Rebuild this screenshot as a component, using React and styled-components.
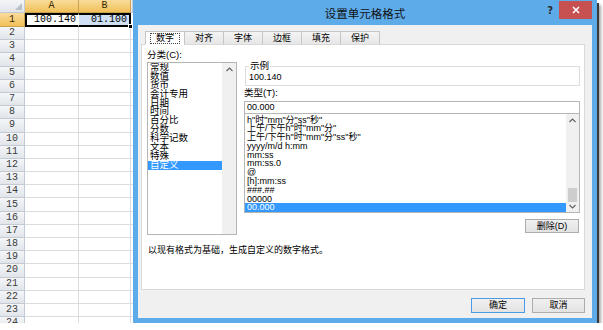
import React from "react";
import styled, { createGlobalStyle } from "styled-components";

const SANS = `"Liberation Sans", "Noto Sans CJK SC", sans-serif`;
const MONO = `"Liberation Mono", "Noto Sans CJK SC", monospace`;

const GlobalStyle = createGlobalStyle`
  html, body { margin: 0; padding: 0; background: #fff; overflow: hidden; }
  body { font-family: ${SANS}; color: #000; }
  * { box-sizing: border-box; }
`;

const rows = Array.from({ length: 24 }, (_, i) => i + 1);

const categories = ["常规", "数值", "货币", "会计专用", "日期", "时间", "百分比", "分数", "科学记数", "文本", "特殊", "自定义"];

const formats = [
  'h"时"mm"分"ss"秒"',
  '上午/下午h"时"mm"分"',
  '上午/下午h"时"mm"分"ss"秒"',
  "yyyy/m/d h:mm",
  "mm:ss",
  "mm:ss.0",
  "@",
  "[h]:mm:ss",
  "###.##",
  "00000",
  "00.000",
];

const tabs = ["数字", "对齐", "字体", "边框", "填充", "保护"];

const Frame = styled.div`
  display: flex;
  width: 597px;
  height: 323px;
  box-shadow: 2px 3px 0 #3a3a3a, 4px 5px 3px rgba(0, 0, 0, 0.35);
`;

/* ---------- spreadsheet ---------- */

const Sheet = styled.div`
  flex: none;
  width: 133px;
  height: 323px;
  overflow: hidden;
  display: grid;
  grid-template-columns: 25px 54px 52px 2px;
  grid-template-rows: 13px 14px;
  grid-auto-rows: 13.2px;
  align-content: start;
  font-family: ${MONO};
  font-size: 10px;
  color: #333;
`;

const Corner = styled.div`
  position: relative;
  background: linear-gradient(#f4f6f8, #e1e5ea);
  border-right: 1px solid #c3cad3;
  border-bottom: 1px solid #c3cad3;

  &::after {
    content: "";
    position: absolute;
    right: 2px;
    bottom: 2px;
    border-left: 7px solid transparent;
    border-bottom: 7px solid #b9c0c9;
  }
`;

const Head = styled.div`
  display: flex;
  align-items: center;
  justify-content: center;
  background: ${(p) => (p.$active ? "linear-gradient(#f9dc9c, #f1c058)" : "linear-gradient(#f4f6f8, #e1e5ea)")};
  border-right: 1px solid ${(p) => (p.$active ? "#c9a24f" : "#c3cad3")};
  border-bottom: 1px solid ${(p) => (p.$active ? "#c9a24f" : "#c3cad3")};
  color: ${(p) => (p.$active ? "#3a2a00" : "#3c3c3c")};
  line-height: 1;
`;

const Cell = styled.div`
  position: relative;
  display: flex;
  align-items: center;
  justify-content: flex-end;
  padding-right: 2px;
  background: ${(p) => (p.$tint ? "#cfe0f5" : "#fff")};
  border-right: 1px solid #dadcdf;
  border-bottom: 1px solid #dadcdf;
  color: #000;
  line-height: 1;
  ${(p) => p.$selLeft && "border-left: 2px solid #000; border-top: 2px solid #000; border-bottom: 2px solid #000; border-right-color: transparent;"}
  ${(p) => p.$selRight && "border-right: 2px solid #000; border-top: 2px solid #000; border-bottom: 2px solid #000;"}
`;

const FillHandle = styled.span`
  position: absolute;
  right: -4px;
  bottom: -4px;
  width: 5px;
  height: 5px;
  background: #000;
  border: 1px solid #fff;
  z-index: 2;
`;

/* ---------- dialog ---------- */

const Dialog = styled.div`
  flex: 1;
  display: flex;
  flex-direction: column;
  background: #5eabea;
  padding: 0 5px 5px;
`;

const TitleBar = styled.div`
  height: 25px;
  flex: none;
  display: grid;
  grid-template-columns: 1fr auto 1fr;
  align-items: start;
`;

const Title = styled.div`
  grid-column: 2;
  padding-top: 7px;
  font-size: 11.5px;
  line-height: 14px;
  color: #111;
`;

const Controls = styled.div`
  grid-column: 3;
  justify-self: end;
  display: flex;
  align-items: flex-start;
`;

const Help = styled.span`
  margin-top: 5px;
  margin-right: 6px;
  font-family: "DejaVu Sans", sans-serif;
  font-weight: bold;
  font-size: 10px;
  color: #2b2b2b;
`;

const Close = styled.div`
  width: 33px;
  height: 18px;
  margin-top: 1px;
  background: #c75050;
  display: flex;
  align-items: center;
  justify-content: center;
`;

const Client = styled.div`
  flex: 1;
  display: flex;
  flex-direction: column;
  background: #f0f0f0;
  padding: 6px 7px 0 3px;
`;

const TabRow = styled.div`
  position: relative;
  z-index: 1;
  display: flex;
  margin-left: 4px;
  margin-bottom: -1px;
`;

const Tab = styled.div`
  width: 40px;
  height: 14px;
  margin-right: -1px;
  display: flex;
  align-items: center;
  justify-content: center;
  border: 1px solid #c6c6c6;
  border-bottom-color: ${(p) => (p.$active ? "#fff" : "#d9d9d9")};
  background: ${(p) => (p.$active ? "#fff" : "linear-gradient(#f4f4f4, #e6e6e6)")};
  font-size: 9px;
  line-height: 1;
`;

const FocusText = styled.span`
  padding: 0 5px;
  outline: ${(p) => (p.$focus ? "1px dotted #444" : "none")};
  outline-offset: 0;
`;

const Panel = styled.div`
  height: 246px;
  background: #fff;
  border: 1px solid #d9d9d9;
  display: grid;
  grid-template-columns: 90px 336px;
  grid-template-rows: auto auto;
  column-gap: 7px;
  align-content: start;
  padding: 5px 4px 0 5px;
`;

const Column = styled.div`
  display: flex;
  flex-direction: column;
  padding-top: ${(p) => p.$pad || 0}px;
`;

const Label = styled.div`
  font-size: 9.5px;
  line-height: 10px;
  margin-top: ${(p) => p.$mt || 0}px;
`;

const ListBox = styled.div`
  display: flex;
  height: ${(p) => p.$h}px;
  margin-top: ${(p) => p.$mt || 0}px;
  border: 1px solid #b5b5b5;
  background: #fff;
  overflow: hidden;
`;

const Items = styled.div`
  flex: 1;
  padding-top: ${(p) => p.$pt || 0}px;
`;

const Item = styled.div`
  height: ${(p) => p.$lh}px;
  line-height: ${(p) => p.$lh}px;
  padding-left: 2px;
  white-space: nowrap;
  font-size: ${(p) => p.$fs}px;
  background: ${(p) => (p.$selected ? "#3399ff" : "transparent")};
  color: ${(p) => (p.$selected ? "#fff" : "#000")};
`;

const ScrollBar = styled.div`
  flex: none;
  width: ${(p) => p.$w}px;
  display: flex;
  flex-direction: column;
  align-items: center;
  background: #f0f0f0;
  padding: 4px 0 3px;
`;

const Thumb = styled.div`
  width: 9px;
  height: 14px;
  margin-top: auto;
  margin-bottom: 2px;
  background: #cdcdcd;
`;

const Sample = styled.fieldset`
  margin: 0 0 0 1px;
  padding: 0 3px 1px;
  min-width: 0;
  border: 1px solid #dcdcdc;
`;

const Legend = styled.legend`
  padding: 0 1px;
  margin-left: 0;
  font-size: 9.5px;
  line-height: 10px;
`;

const SampleValue = styled.div`
  font-size: 9px;
  line-height: 13px;
`;

const Input = styled.div`
  height: 13px;
  margin-top: 3px;
  border: 1px solid #b5b5b5;
  border-bottom-color: #8a8a8a;
  padding-left: 2px;
  font-size: 9px;
  line-height: 11px;
  background: #fff;
`;

const Button = styled.div`
  width: ${(p) => p.$w || 54}px;
  height: ${(p) => p.$h || 15}px;
  display: flex;
  align-items: center;
  justify-content: center;
  border: 1px solid ${(p) => (p.$default ? "#4a9ae6" : "#adadad")};
  background: linear-gradient(#f0f0f0, #e3e3e3);
  font-size: 9px;
  line-height: 1;
  color: #000;
`;

const DeleteRow = styled.div`
  display: flex;
  justify-content: flex-end;
  margin-top: 6px;
  padding-right: 1px;
`;

const Description = styled.div`
  grid-column: 1 / -1;
  margin-top: 10px;
  padding-left: 1px;
  font-size: 9px;
  line-height: 10px;
`;

const Footer = styled.div`
  display: flex;
  justify-content: flex-end;
  gap: 7px;
  padding-top: 8px;
`;

const Chevron = ({ down }) => (
  <svg width="7" height="5" viewBox="0 0 7 5">
    <path d={down ? "M0.5 1 L3.5 4 L6.5 1" : "M0.5 4 L3.5 1 L6.5 4"} fill="none" stroke="#606060" strokeWidth="1.1" />
  </svg>
);

const CloseIcon = () => (
  <svg width="8" height="8" viewBox="0 0 8 8">
    <path d="M1 1 L7 7 M7 1 L1 7" stroke="#fff" strokeWidth="1.6" />
  </svg>
);

export default function App() {
  return (
    <>
      <GlobalStyle />
      <Frame>
        <Sheet>
          <Corner />
          <Head $active>A</Head>
          <Head $active>B</Head>
          <Head />
          {rows.map((r) => (
            <React.Fragment key={r}>
              <Head $active={r === 1}>{r}</Head>
              <Cell $selLeft={r === 1}>{r === 1 ? "100.140" : ""}</Cell>
              <Cell $selRight={r === 1} $tint={r === 1}>
                {r === 1 ? "01.100" : ""}
                {r === 1 && <FillHandle />}
              </Cell>
              <Cell />
            </React.Fragment>
          ))}
        </Sheet>

        <Dialog>
          <TitleBar>
            <Title>设置单元格格式</Title>
            <Controls>
              <Help>?</Help>
              <Close>
                <CloseIcon />
              </Close>
            </Controls>
          </TitleBar>

          <Client>
            <TabRow>
              {tabs.map((t, i) => (
                <Tab key={t} $active={i === 0}>
                  <FocusText $focus={i === 0}>{t}</FocusText>
                </Tab>
              ))}
            </TabRow>

            <Panel>
              <Column>
                <Label>分类(C):</Label>
                <ListBox $h={173} $mt={2}>
                  <Items>
                    {categories.map((c) => (
                      <Item key={c} $lh={8.9} $fs={9.5} $selected={c === "自定义"}>
                        {c}
                      </Item>
                    ))}
                  </Items>
                  <ScrollBar $w={14}>
                    <Chevron />
                  </ScrollBar>
                </ListBox>
              </Column>

              <Column $pad={11}>
                <Sample>
                  <Legend>示例</Legend>
                  <SampleValue>100.140</SampleValue>
                </Sample>
                <Label $mt={2}>类型(T):</Label>
                <Input>00.000</Input>
                <ListBox $h={100} $mt={-1}>
                  <Items $pt={1.5}>
                    {formats.map((f) => (
                      <Item key={f} $lh={8.8} $fs={9} $selected={f === "00.000"}>
                        {f}
                      </Item>
                    ))}
                  </Items>
                  <ScrollBar $w={13}>
                    <Chevron />
                    <Thumb />
                    <Chevron down />
                  </ScrollBar>
                </ListBox>
                <DeleteRow>
                  <Button $w={54} $h={14}>删除(D)</Button>
                </DeleteRow>
              </Column>

              <Description>以现有格式为基础，生成自定义的数字格式。</Description>
            </Panel>

            <Footer>
              <Button $default>确定</Button>
              <Button $w={53}>取消</Button>
            </Footer>
          </Client>
        </Dialog>
      </Frame>
    </>
  );
}
